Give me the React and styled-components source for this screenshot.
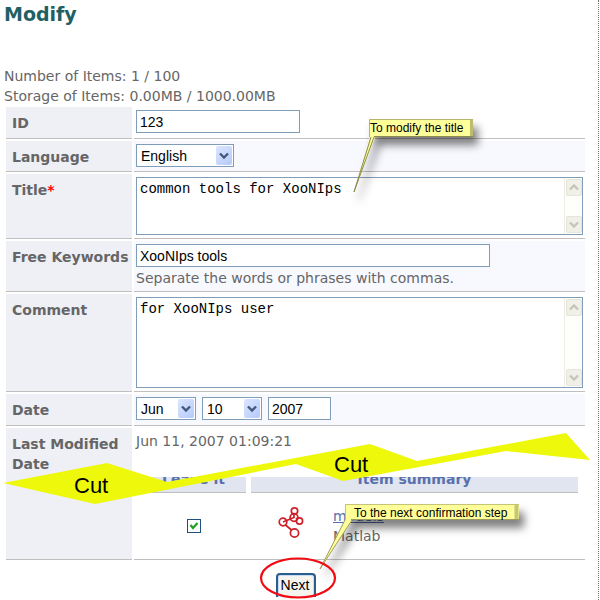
import React from "react";
import styled, { createGlobalStyle } from "styled-components";

const GlobalStyle = createGlobalStyle`
  * { box-sizing: border-box; }
  body {
    margin: 0;
    background: #fff;
    color: #666;
    font-family: Verdana, "DejaVu Sans", sans-serif;
    font-size: 14px;
    line-height: 20px;
  }
`;

const Page = styled.main`
  position: relative;
  min-height: 100vh;
  margin-right: 1px;
  padding: 4px 13px 0 4px;
  border-right: 1px dotted #777;
  overflow: hidden;
`;

const Title = styled.h1`
  margin: 0 0 41px;
  color: #1f6065;
  font-size: 19px;
  line-height: 21px;
`;

const Stat = styled.p`
  margin: 0;
`;

const Form = styled.form`
  display: grid;
  gap: 2px;
  margin: 1px 0 0 2px;
`;

const Row = styled.div`
  display: grid;
  grid-template-columns: 126px minmax(0, 1fr);
  gap: 2px;
  min-height: ${(p) => p.$height || 32}px;
`;

const LabelCell = styled.div`
  padding: 6px 0 4px 6px;
  border-bottom: 1px solid #bfbfbf;
  background: #eff0f6;
  font-weight: bold;
`;

const FieldCell = styled.div`
  padding: 3px 2px;
  border-bottom: 1px solid #bfbfbf;
  background: ${(p) => (p.$tinted ? "#f8f9ff" : "#fff")};
`;

const Hint = styled.p`
  margin: 1px 0 0;
`;

const Required = styled.span`
  color: #f00;
`;

const Inline = styled.div`
  display: flex;
  gap: 6px;
`;

const TextInput = styled.input`
  display: block;
  width: ${(p) => p.$width}px;
  max-width: 100%;
  height: 23px;
  padding: 0 3px;
  border: 1px solid #7f9db9;
  background: #fff;
  color: #000;
  font: 14px "Liberation Sans", Arial, sans-serif;
`;

const SelectBox = styled.div`
  display: grid;
  width: ${(p) => p.$width}px;
  height: 23px;
  border: 1px solid #7f9db9;
  background: #fff;
`;

const NativeSelect = styled.select`
  grid-area: 1 / 1;
  min-width: 0;
  padding: 0 20px 0 4px;
  border: 0;
  appearance: none;
  background: transparent;
  color: #000;
  font: 14px "Liberation Sans", Arial, sans-serif;
`;

const SelectArrow = styled.svg`
  grid-area: 1 / 1;
  place-self: center end;
  width: 16px;
  height: 19px;
  margin-right: 1px;
  border-radius: 2px;
  background: linear-gradient(135deg, #dbe5ff, #b5cafa);
  pointer-events: none;
`;

const AreaBox = styled.div`
  display: flex;
  height: ${(p) => p.$height}px;
  border: 1px solid #7f9db9;
  background: #fff;
`;

const NativeArea = styled.textarea`
  flex: 1;
  min-width: 0;
  padding: 3px;
  border: 0;
  resize: none;
  overflow: hidden;
  background: transparent;
  color: #000;
  font: 14px/16px "Liberation Mono", "Courier New", monospace;
`;

const ScrollTrack = styled.div`
  display: flex;
  flex-direction: column;
  justify-content: space-between;
  width: 18px;
  padding: 1px;
  border-left: 1px solid #eeede5;
  background: #fefefa;
`;

const ScrollArrow = styled.svg`
  width: 16px;
  height: 17px;
  border: 1px solid #e6e5dc;
  border-radius: 2px;
  background: #f0f0e9;
`;

const Items = styled.table`
  width: 100%;
  margin: 26px 0 0;
  border-collapse: separate;
  border-spacing: 5px 0;
  table-layout: fixed;

  th {
    height: 16px;
    padding: 0;
    border-bottom: 1px solid #bfbfbf;
    background: #e1e5ef;
    color: #5a70ad;
  }

  td {
    height: 63px;
    padding: 0;
  }
`;

const HeadText = styled.div`
  display: flex;
  align-items: flex-end;
  justify-content: center;
  height: 15px;
  overflow: hidden;
  line-height: 26px;
`;

const CheckLabel = styled.label`
  display: grid;
  width: 14px;
  height: 14px;
  margin: 2px auto 0;
`;

const Check = styled.input`
  grid-area: 1 / 1;
  width: 14px;
  height: 14px;
  margin: 0;
  appearance: none;
  border: 1px solid #1d5281;
  background: #fff;
`;

const Tick = styled.svg`
  grid-area: 1 / 1;
  visibility: hidden;
  pointer-events: none;

  input:checked + & { visibility: visible; }
`;

const Summary = styled.div`
  display: grid;
  grid-template-columns: 27px 1fr;
  gap: 28px;
  align-items: start;
  padding: 3px 0 0 27px;
`;

const ItemLink = styled.a`
  color: #5a70ad;
`;

const Actions = styled.div`
  display: flex;
  padding: 11px 0 0 270px;
`;

const NextButton = styled.button`
  width: 40px;
  height: 24px;
  padding: 0 2px 2px 0;
  border: 2px solid #2c5e8c;
  border-bottom: 0;
  border-radius: 4px 4px 0 0;
  background: #f5f4ef;
  box-shadow: inset 0 0 0 1px #c9dcf7;
  color: #000;
  font: 14px "Liberation Sans", Arial, sans-serif;
`;

const Marks = styled.svg`
  position: absolute;
  top: 0;
  left: 0;
  width: 600px;
  height: 600px;
  pointer-events: none;
`;

const CutText = styled.text`
  fill: #000;
  font: 22px "Liberation Sans", Arial, sans-serif;
`;

const NoteText = styled.text`
  fill: #000;
  font: 12px "Liberation Sans", Arial, sans-serif;
`;

function Select({ width, label, value, options, id }) {
  return (
    <SelectBox $width={width}>
      <NativeSelect id={id} aria-label={label} defaultValue={value}>
        {options.map((o) => <option key={o}>{o}</option>)}
      </NativeSelect>
      <SelectArrow viewBox="0 0 16 19" aria-hidden="true">
        <path d="M4 7.5l4 4 4-4" fill="none" stroke="#42587c" strokeWidth="2.4" />
      </SelectArrow>
    </SelectBox>
  );
}

function Area({ id, height, value }) {
  return (
    <AreaBox $height={height}>
      <NativeArea id={id} defaultValue={value} spellCheck="false" />
      <ScrollTrack aria-hidden="true">
        <ScrollArrow viewBox="0 0 14 15">
          <path d="M3 9.5l4-4 4 4" fill="none" stroke="#c6c5b8" strokeWidth="2.4" />
        </ScrollArrow>
        <ScrollArrow viewBox="0 0 14 15">
          <path d="M3 5.5l4 4 4-4" fill="none" stroke="#c6c5b8" strokeWidth="2.4" />
        </ScrollArrow>
      </ScrollTrack>
    </AreaBox>
  );
}

function FormRow({ label, id, required, tinted, height, children }) {
  return (
    <Row $height={height}>
      <LabelCell>
        <label htmlFor={id}>{label}{required && <Required>*</Required>}</label>
      </LabelCell>
      <FieldCell $tinted={tinted}>{children}</FieldCell>
    </Row>
  );
}

function ModelIcon() {
  return (
    <svg width="27" height="34" viewBox="0 0 27 34" fill="none" stroke="#cf1f28" strokeWidth="1.7" aria-hidden="true">
      <path d="M5 16l11-4.500M7 18.500l7 6M16 7v5M18 12l1 1" />
      <circle cx="16.500" cy="5" r="3.200" />
      <circle cx="16" cy="11.500" r="3.900" />
      <circle cx="5" cy="16" r="3.800" />
      <circle cx="21.500" cy="15" r="3.100" />
      <circle cx="16.500" cy="27" r="4.100" />
    </svg>
  );
}

function Annotations() {
  return (
    <Marks viewBox="0 0 600 600">
      <defs>
        <filter id="shadow" x="-20%" y="-20%" width="150%" height="180%">
          <feDropShadow dx="5" dy="8" stdDeviation="4" floodColor="#000" floodOpacity="0.5" />
        </filter>
      </defs>
      <path fill="#eef80a" d="M3 483L107 463L167 482L370 444L417 461L566 433L590 460L506 451L343 481L296 464L95 504Z" />
      <CutText x="74" y="493">Cut</CutText>
      <CutText x="334" y="472">Cut</CutText>
      <g filter="url(#shadow)">
        <path d="M369 119H473V137H375L354 192L370 137Z" fill="#ffff99" />
        <path d="M369.500 137V119.500H473" fill="none" stroke="#b5b56c" />
        <path d="M374 136.500H473M374 137L354 192L371 137" fill="none" stroke="#8a8a50" />
        <path d="M471.500 120V136" stroke="#bcbc70" strokeWidth="3" />
      </g>
      <NoteText x="370" y="132">To modify the title</NoteText>
      <g filter="url(#shadow)">
        <path d="M345 504H519V520H352L320 569L345 520Z" fill="#ffff99" />
        <path d="M345.500 520V504.500H519" fill="none" stroke="#c5c575" />
        <path d="M351 519.500H519M352 520L320 569L345 520" fill="none" stroke="#9c9c5c" />
        <path d="M516.500 505V519" stroke="#c5c57b" strokeWidth="4" />
      </g>
      <NoteText x="354" y="517">To the next confirmation step</NoteText>
      <ellipse cx="298" cy="578" rx="37" ry="19.500" fill="none" stroke="#f00c12" strokeWidth="2.200" />
    </Marks>
  );
}

export default function App() {
  return (
    <>
      <GlobalStyle />
      <Page>
        <Title>Modify</Title>
        <Stat>Number of Items: 1 / 100</Stat>
        <Stat>Storage of Items: 0.00MB / 1000.00MB</Stat>
        <Form onSubmit={(e) => e.preventDefault()}>
          <FormRow label="ID" id="item-id">
            <TextInput id="item-id" $width={164} defaultValue="123" />
          </FormRow>
          <FormRow label="Language" id="language" tinted height={31}>
            <Select id="language" width={98} value="English" options={["English", "Japanese"]} />
          </FormRow>
          <FormRow label="Title" id="title" required>
            <Area id="title" height={58} value="common tools for XooNIps" />
          </FormRow>
          <FormRow label="Free Keywords" id="keywords" tinted>
            <TextInput id="keywords" $width={354} defaultValue="XooNIps tools" />
            <Hint>Separate the words or phrases with commas.</Hint>
          </FormRow>
          <FormRow label="Comment" id="comment">
            <Area id="comment" height={91} value="for XooNIps user" />
          </FormRow>
          <FormRow label="Date" id="month" tinted>
            <Inline>
              <Select id="month" width={60} value="Jun" options={["May", "Jun", "Jul"]} />
              <Select label="Day" width={60} value="10" options={["9", "10", "11"]} />
              <TextInput aria-label="Year" $width={63} defaultValue="2007" />
            </Inline>
          </FormRow>
          <Row>
            <LabelCell>Last Modified Date</LabelCell>
            <FieldCell>
              Jun 11, 2007 01:09:21
              <Items>
                <colgroup>
                  <col width="105" />
                  <col />
                </colgroup>
                <thead>
                  <tr>
                    <th><HeadText>Leave it</HeadText></th>
                    <th><HeadText>Item summary</HeadText></th>
                  </tr>
                </thead>
                <tbody>
                  <tr>
                    <td>
                      <CheckLabel>
                        <Check type="checkbox" aria-label="Leave it" defaultChecked />
                        <Tick width="14" height="14" viewBox="0 0 14 14" aria-hidden="true">
                          <path d="M3.500 6l2.500 3 4.500-5" fill="none" stroke="#21a121" strokeWidth="2.200" />
                        </Tick>
                      </CheckLabel>
                    </td>
                    <td>
                      <Summary>
                        <ModelIcon />
                        <div>
                          <ItemLink href="#models">models</ItemLink>
                          <div>Matlab</div>
                        </div>
                      </Summary>
                    </td>
                  </tr>
                </tbody>
              </Items>
            </FieldCell>
          </Row>
          <Actions>
            <NextButton type="submit">Next</NextButton>
          </Actions>
        </Form>
        <Annotations />
      </Page>
    </>
  );
}
